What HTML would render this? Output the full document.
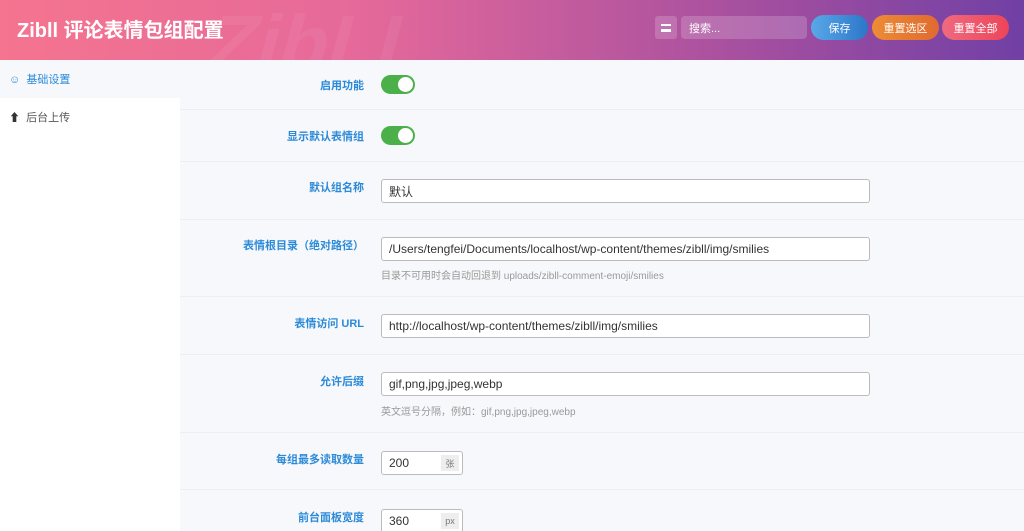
<!DOCTYPE html><html><head><meta charset="utf-8"><style>
*{box-sizing:border-box;margin:0;padding:0}
html,body{width:1024px;height:531px;overflow:hidden}
body{font-family:"Liberation Sans","Noto Sans CJK SC",sans-serif;background:#f7f8fb;position:relative}
.hd{position:absolute;left:0;top:0;width:1024px;height:60px;background:linear-gradient(90deg,#f5748f 0%,#e5699a 35%,#a24ea0 75%,#7040a5 100%);overflow:hidden}
.hd h1{position:absolute;left:17px;top:14px;color:#fff;font-size:20px;font-weight:bold}
.wm{position:absolute;left:210px;top:-2px;font-size:80px;font-weight:bold;color:rgba(255,255,255,.06);transform:skewX(-15deg)}
.ic{position:absolute;left:655px;top:16px;width:22px;height:23px;background:rgba(255,255,255,.18);border-radius:3px}
.ic:after{content:"";position:absolute;left:6px;top:8px;width:10px;height:3px;border-top:2px solid #fff;border-bottom:2px solid #fff}
.ic:before{content:"";position:absolute;left:6px;top:14px;width:10px;height:2px;background:#fff}
.sr{position:absolute;left:681px;top:16px;width:126px;height:23px;background:rgba(255,255,255,.18);border-radius:4px;color:#fff;font-size:11px;display:flex;align-items:center;padding-left:8px}
.b{position:absolute;top:15px;height:25px;border-radius:13px;color:#fff;font-size:11px;display:flex;align-items:center;justify-content:center}
.side{position:absolute;left:0;top:60px;width:180px;height:471px;background:#fff}
.s1{height:38px;background:#f7f8fb;color:#2b8ad8;font-size:11px;display:flex;align-items:center;padding-left:9px}
.s2{height:38px;color:#555;font-size:11px;display:flex;align-items:center;padding-left:9px}
.row{position:absolute;left:180px;width:844px;border-bottom:1px solid #eceef2}
.lb{position:absolute;right:660px;color:#2b8ad8;font-size:11px;font-weight:bold;white-space:nowrap}
.in{position:absolute;left:201px;width:489px;height:24px;border:1px solid #bbb;border-radius:3px;background:#fff;font-size:12px;padding:0 7px;color:#333;display:flex;align-items:center}
.hp{position:absolute;left:201px;font-size:10px;color:#999}
.tg{position:absolute;left:201px;width:34px;height:19px;border-radius:10px;background:#4bb04a}
.tg:after{content:"";position:absolute;right:2px;top:2px;width:15px;height:15px;border-radius:50%;background:#fff}
.sm{width:82px}
.un{position:absolute;right:3px;top:3px;width:18px;height:16px;background:#eee;font-size:9px;color:#777;display:flex;align-items:center;justify-content:center}
</style></head><body>
<div class="hd"><div class="wm">ZibLL</div><h1>Zibll 评论表情包组配置</h1>
<div class="ic"></div><div class="sr">搜索...</div>
<div class="b" style="left:811px;width:57px;background:linear-gradient(90deg,#59a8e8,#2d76c9)">保存</div>
<div class="b" style="left:872px;width:67px;background:linear-gradient(90deg,#ec8c36,#e06a2f)">重置选区</div>
<div class="b" style="left:942px;width:67px;background:linear-gradient(90deg,#ef6a7f,#ee4458)">重置全部</div></div>
<div class="side"><div class="s1">☺&nbsp; 基础设置</div><div class="s2"><span style="font-weight:bold;color:#333">⬆</span>&nbsp; 后台上传</div></div>
<div class="row" style="top:60px;height:50px"><div class="lb" style="top:17px">启用功能</div><div class="tg" style="top:15px"></div></div>
<div class="row" style="top:110px;height:52px"><div class="lb" style="top:18px">显示默认表情组</div><div class="tg" style="top:16px"></div></div>
<div class="row" style="top:162px;height:58px"><div class="lb" style="top:17px">默认组名称</div><div class="in" style="top:17px">默认</div></div>
<div class="row" style="top:220px;height:77px"><div class="lb" style="top:17px">表情根目录（绝对路径）</div><div class="in" style="top:17px">/Users/tengfei/Documents/localhost/wp-content/themes/zibll/img/smilies</div><div class="hp" style="top:47px">目录不可用时会自动回退到 uploads/zibll-comment-emoji/smilies</div></div>
<div class="row" style="top:297px;height:58px"><div class="lb" style="top:18px">表情访问 URL</div><div class="in" style="top:17px">http://localhost/wp-content/themes/zibll/img/smilies</div></div>
<div class="row" style="top:355px;height:78px"><div class="lb" style="top:18px">允许后缀</div><div class="in" style="top:17px">gif,png,jpg,jpeg,webp</div><div class="hp" style="top:48px">英文逗号分隔，例如：gif,png,jpg,jpeg,webp</div></div>
<div class="row" style="top:433px;height:57px"><div class="lb" style="top:18px">每组最多读取数量</div><div class="in sm" style="top:18px">200<span class="un">张</span></div></div>
<div class="row" style="top:490px;height:41px;border:0"><div class="lb" style="top:19px">前台面板宽度</div><div class="in sm" style="top:19px">360<span class="un">px</span></div></div>
</body></html>
